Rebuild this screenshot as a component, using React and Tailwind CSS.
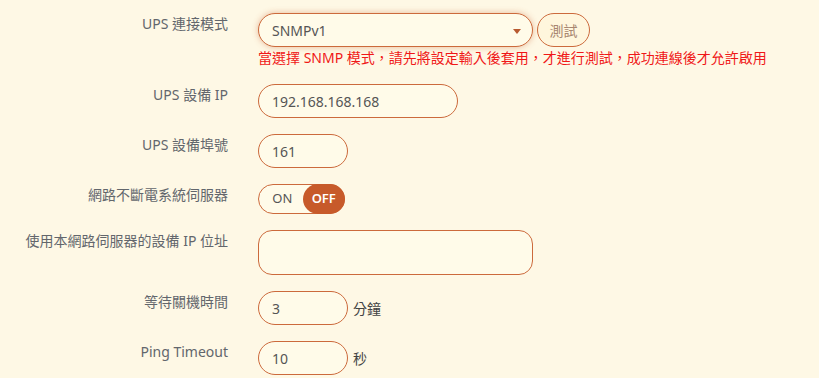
import React from 'react';

const Row = ({ label, children, className = '' }) => (
  <div className={`flex mb-4 ${className}`}>
    <div className="w-[228px] shrink-0 text-right text-[14px] leading-5 text-[#62666c] pt-[1px]">{label}</div>
    <div className="ml-[30px]">{children}</div>
  </div>
);

const inputCls =
  'h-[34px] rounded-full border border-[#cc6a3c] bg-[#fffbe9] px-[13px] text-[14px] text-[#555] outline-none';

export default function App() {
  return (
    <div
      className="min-h-[378px] w-[819px] bg-[#fef8e5] pt-[13px]"
      style={{ fontFamily: '"Noto Sans", "Noto Sans CJK TC", sans-serif' }}
    >
      <Row label="UPS 連接模式">
        <div className="flex items-center gap-[4px]">
          <div className="relative flex h-[34px] w-[275px] items-center rounded-full border border-[#cc6a3c] bg-[#fffbe9] px-[13px] text-[14px] text-[#555] shadow-[0_0_6px_rgba(204,106,60,0.45)]">
            SNMPv1
            <span className="absolute right-[11px] top-[15px] h-0 w-0 border-x-[4px] border-t-[5px] border-x-transparent border-t-[#b85a30]" />
          </div>
          <button className="h-[34px] w-[53px] rounded-full border border-[#cc6a3c] bg-[#fff6dd] text-[14px] text-[#a88670]">
            測試
          </button>
        </div>
        <div className="mt-[1px] text-[14px] leading-5 text-[#f01818]">
          當選擇 SNMP 模式，請先將設定輸入後套用，才進行測試，成功連線後才允許啟用
        </div>
      </Row>

      <Row label="UPS 設備 IP">
        <input className={`${inputCls} w-[200px]`} defaultValue="192.168.168.168" />
      </Row>

      <Row label="UPS 設備埠號">
        <input className={`${inputCls} w-[90px]`} defaultValue="161" />
      </Row>

      <Row label="網路不斷電系統伺服器">
        <div className="flex h-[30px] w-[87px] items-center rounded-full border border-[#cc6a3c] bg-[#fffbe9]">
          <span className="w-[44px] pl-[3px] text-center text-[13px] text-[#555]">ON</span>
          <span className="-mr-[1px] flex h-[30px] w-[43px] items-center justify-center rounded-full bg-[#c75a2a] text-[13px] font-semibold text-white">
            OFF
          </span>
        </div>
      </Row>

      <Row label="使用本網路伺服器的設備 IP 位址">
        <textarea className="block h-[45px] w-[275px] resize-none rounded-[14px] border border-[#cc6a3c] bg-[#fffbe9] outline-none" />
      </Row>

      <Row label="等待關機時間">
        <div className="flex items-center gap-[5px]">
          <input className={`${inputCls} w-[90px]`} defaultValue="3" />
          <span className="text-[14px] text-[#444]">分鐘</span>
        </div>
      </Row>

      <Row label="Ping Timeout">
        <div className="flex items-center gap-[5px]">
          <input className={`${inputCls} w-[90px]`} defaultValue="10" />
          <span className="text-[14px] text-[#444]">秒</span>
        </div>
      </Row>
    </div>
  );
}
